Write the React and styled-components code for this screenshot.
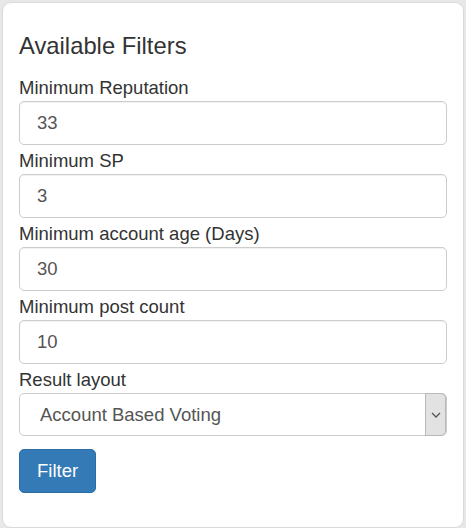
import React from 'react'
import styled, { createGlobalStyle } from 'styled-components'

const GlobalStyle = createGlobalStyle`
  html, body {
    margin: 0;
    padding: 0;
    background: #e8e8e8;
  }
  body {
    font-family: "Liberation Sans", Arial, sans-serif;
    color: #333;
  }
`

const Page = styled.div`
  height: 528px;
  padding: 2px 2px 0 2px;
  box-sizing: border-box;
`

const Panel = styled.div`
  height: 100%;
  box-sizing: border-box;
  background: #fff;
  border: 1px solid #dadada;
  border-radius: 9px;
  padding: 30px 16px 0 16px;
`

const Title = styled.h4`
  margin: 0 0 16px;
  font-size: 23.8px;
  font-weight: 400;
  line-height: 26px;
  color: #333;
`

const FormGroup = styled.div`
  margin-bottom: 3px;
`

const Label = styled.label`
  display: block;
  font-size: 18.5px;
  line-height: 26px;
  color: #333;
`

const Input = styled.input`
  display: block;
  width: 100%;
  height: 44px;
  box-sizing: border-box;
  padding: 0 17px;
  font-family: inherit;
  font-size: 18.5px;
  color: #555;
  background: #fff;
  border: 1px solid #ccc;
  border-radius: 5px;
  box-shadow: inset 0 1px 1px rgba(0, 0, 0, 0.06);
  outline: none;
`

const SelectWrap = styled.div`
  position: relative;
`

const Select = styled.select`
  display: block;
  width: 100%;
  height: 43px;
  box-sizing: border-box;
  padding: 0 20px;
  font-family: inherit;
  font-size: 18.5px;
  color: #555;
  background: #fff;
  border: 1px solid #ccc;
  border-radius: 5px;
  appearance: none;
  outline: none;
`

const Arrow = styled.span`
  position: absolute;
  top: 0;
  right: 1px;
  width: 21px;
  height: 43px;
  box-sizing: border-box;
  display: flex;
  align-items: center;
  justify-content: center;
  background: #e2e2e2;
  border: 1px solid #b9b9b9;
  border-radius: 0 5px 5px 0;
  pointer-events: none;
`

const Button = styled.button`
  margin-top: 10px;
  height: 44px;
  padding: 0 17px;
  font-family: inherit;
  font-size: 18.5px;
  color: #fff;
  background: #337ab7;
  border: 1px solid #2e6da4;
  border-radius: 5px;
  cursor: pointer;
`

const filters = [
  { label: 'Minimum Reputation', value: '33' },
  { label: 'Minimum SP', value: '3' },
  { label: 'Minimum account age (Days)', value: '30' },
  { label: 'Minimum post count', value: '10' },
]

const App = () => (
  <Page>
    <GlobalStyle />
    <Panel>
      <Title>Available Filters</Title>
      {filters.map((f) => (
        <FormGroup key={f.label}>
          <Label>{f.label}</Label>
          <Input defaultValue={f.value} />
        </FormGroup>
      ))}
      <FormGroup>
        <Label>Result layout</Label>
        <SelectWrap>
          <Select defaultValue="account">
            <option value="account">Account Based Voting</option>
          </Select>
          <Arrow>
            <svg width="10" height="6" viewBox="0 0 10 6">
              <path d="M1 1l4 4 4-4" fill="none" stroke="#555" strokeWidth="1.3" />
            </svg>
          </Arrow>
        </SelectWrap>
      </FormGroup>
      <Button>Filter</Button>
    </Panel>
  </Page>
)

export default App
